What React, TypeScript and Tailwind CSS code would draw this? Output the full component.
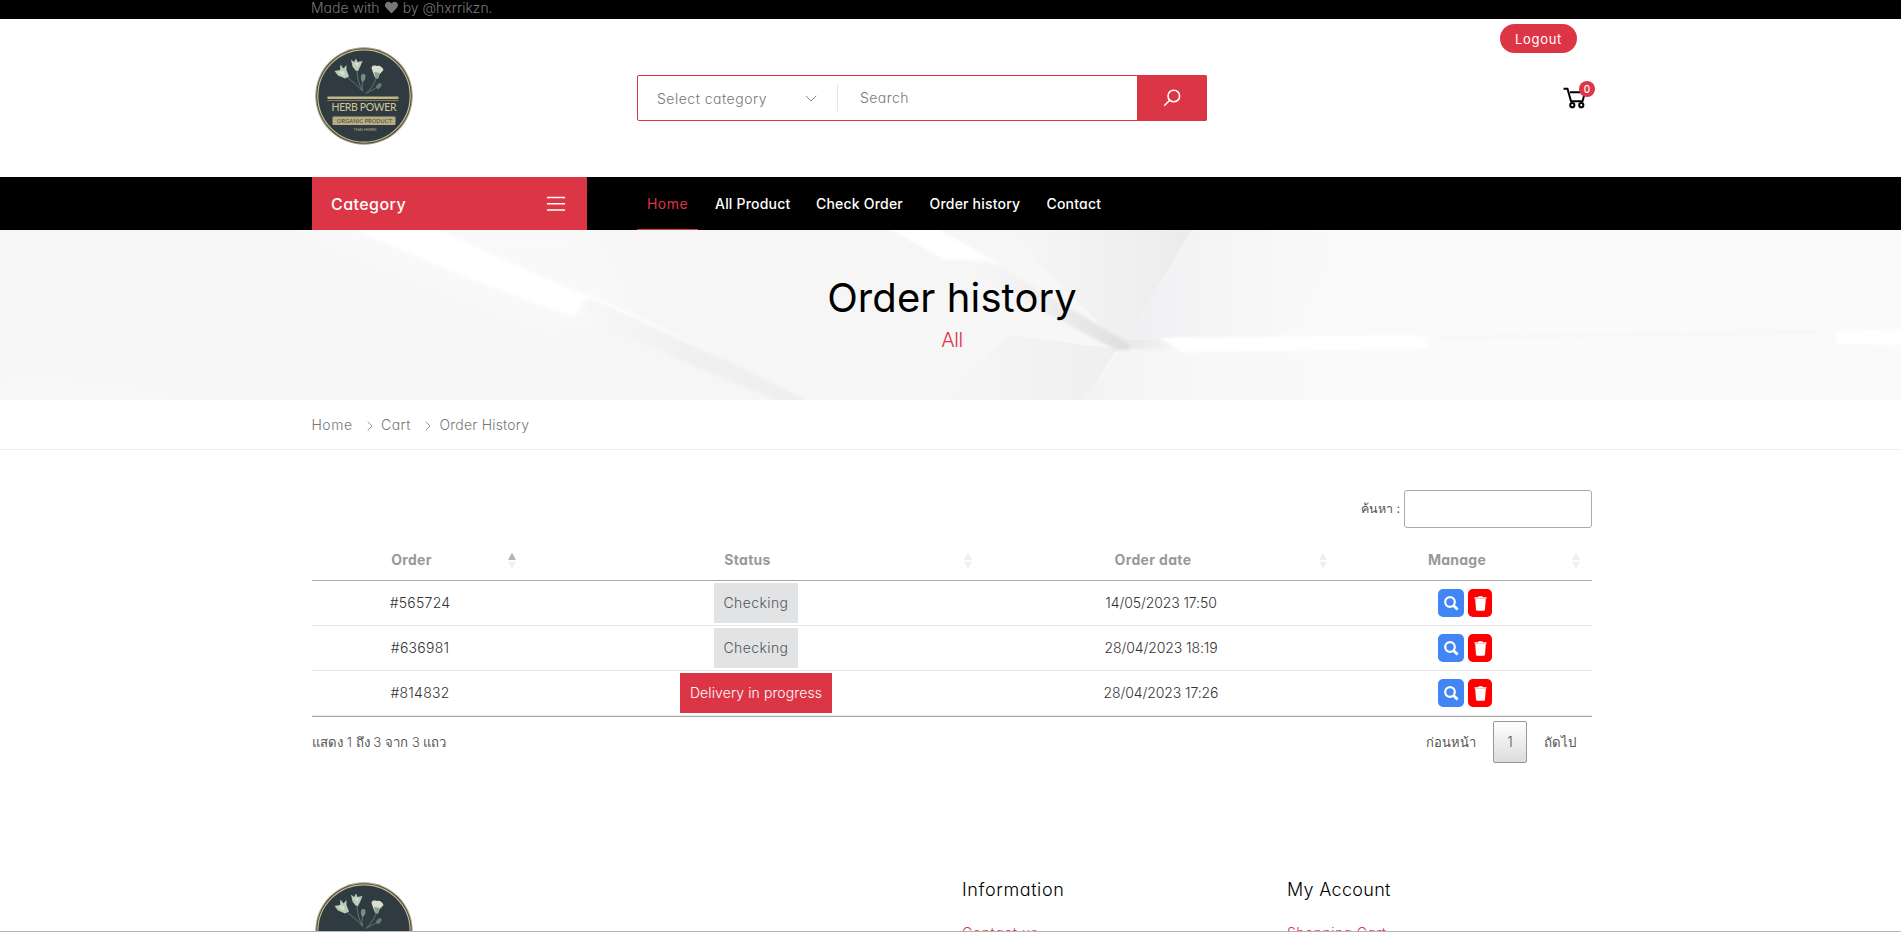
import type { ReactNode } from "react";
import { FaHeart } from "react-icons/fa";

function Sprig() {
  return (
    <g fill="none" stroke="#5f7f76" strokeWidth="0.9" strokeLinecap="round">
      <path d="M32 30 C38 35 43 39 47.500 44" />
      <path d="M42 22 C42 31 44 38 47.500 44" />
      <path d="M48 34 C47 37 46.500 40 47.500 43" />
      <path d="M62 29 C60 36 56 42 51 46.500" />
      <path d="M62 40 C59 43 55 43.500 52 46" />
      <g stroke="none">
        <path fill="#b9cdb9" d="M19.500 24 L25 23 L25.500 17.500 L28.500 21.500 L31.500 18 L31.500 23 L34 29.500 L30 31.500 L23 28.500 Z" />
        <path fill="#dfe3c4" d="M24 25 L28 23.500 L30 27 L27.500 28.500 Z" />
        <path fill="#b9cdb9" d="M36 12.500 L39 15 L41 11.500 L42.500 15 L47.500 14 L45.500 19 L43 24 L40.500 23.500 L37.500 19.500 Z" />
        <path fill="#dfe3c4" d="M40 16 L43.500 16 L42.500 20 Z" />
        <path fill="#d7e0cd" d="M56.500 21 C57 18 60 18.500 61.500 19 C64 17.800 68 20 68.500 23 L64.500 27.500 L63 31.500 L60 30.500 L58 25.500 Z" />
        <path fill="#86a596" d="M59 25 L65 26 L62.500 32 L60.500 31 Z" />
        <path fill="#6f9283" d="M46 29 C46.500 26.500 49.500 26.500 50.500 28.500 C50.800 31.500 49.500 34 47.700 35 C46 34 45.700 31 46 29 Z" />
        <path fill="#5d8071" d="M61 40 C61.500 37 64.500 35.500 66.500 36.500 C67 39.500 65 42 62 42 Z" />
      </g>
    </g>
  );
}

function Logo({ cropped }: { cropped?: boolean }) {
  return (
    <svg width="98" height={cropped ? 50 : 98} viewBox={cropped ? "0 0 98 50" : "0 0 98 98"} className="block shrink-0">
      <circle cx="49" cy="49" r="48.700" fill="#a39d7d" />
      <circle cx="49" cy="49" r="47.600" fill="#2f3b40" />
      <circle cx="49" cy="49" r="46.200" fill="none" stroke="#c9bd8c" strokeWidth="1.200" />
      <Sprig />
      <rect x="12.500" y="49.500" width="71" height="2.500" fill="#c3b586" />
      {!cropped && (
        <g fontFamily="Lato, sans-serif" fontWeight="400">
          <rect x="12.500" y="53" width="71" height="0.900" fill="#8d8768" />
          <text x="16.500" y="64.200" textLength="65" fontSize="10.500" fill="#d3c594">HERB POWER</text>
          <rect x="17.500" y="69.500" width="63" height="8.500" rx="1" fill="#b8ac83" />
          <text x="22" y="75.800" textLength="55" fontSize="5.600" fill="#39443f">ORGANIC PRODUCT</text>
          <text x="38.500" y="84" textLength="23" fontSize="4" fill="#b8b08c">THAI HERBS</text>
        </g>
      )}
    </svg>
  );
}

function BannerArt() {
  return (
    <svg viewBox="0 230 1901 170" preserveAspectRatio="none" className="absolute inset-0 h-full w-full">
      <defs>
        <linearGradient id="base" x1="0" x2="1">
          <stop offset="0" stopColor="#f6f6f6" />
          <stop offset="0.480" stopColor="#f6f6f6" />
          <stop offset="0.750" stopColor="#fafafa" />
        </linearGradient>
        <linearGradient id="shadeL" x1="0" x2="1">
          <stop offset="0" stopColor="#ececed" stopOpacity="0" />
          <stop offset="1" stopColor="#ebebec" />
        </linearGradient>
        <linearGradient id="shadeR" x1="0" x2="1">
          <stop offset="0" stopColor="#efeff2" />
          <stop offset="1" stopColor="#f9f9f9" stopOpacity="0" />
        </linearGradient>
        <linearGradient id="strip" x1="0" x2="1">
          <stop offset="0" stopColor="#f6f6f6" stopOpacity="0" />
          <stop offset="0.500" stopColor="#efefef" />
          <stop offset="1" stopColor="#dedede" />
        </linearGradient>
        <linearGradient id="strip2" x1="0" x2="1">
          <stop offset="0" stopColor="#f7f7f7" />
          <stop offset="0.500" stopColor="#f0f0f0" />
          <stop offset="1" stopColor="#efefef" />
        </linearGradient>
        <linearGradient id="glow" x1="0" x2="1">
          <stop offset="0" stopColor="#ffffff" />
          <stop offset="1" stopColor="#ffffff" stopOpacity="0" />
        </linearGradient>
        <linearGradient id="joint" x1="0" x2="1">
          <stop offset="0" stopColor="#e6e6e6" />
          <stop offset="1" stopColor="#f6f6f6" />
        </linearGradient>
        <filter id="s1" x="-10%" y="-20%" width="120%" height="140%"><feGaussianBlur stdDeviation="1.500" /></filter>
        <filter id="s8" x="-20%" y="-40%" width="140%" height="180%"><feGaussianBlur stdDeviation="12" /></filter>
      </defs>
      <rect x="0" y="230" width="1901" height="170" fill="url(#base)" />
      <polygon points="260,220 590,220 630,310 550,335" fill="#f9f9f9" filter="url(#s8)" />
      <polygon points="0,375 150,390 270,410 0,410" fill="#f9f9f9" filter="url(#s8)" />
      <polygon points="1000,226 1194,226 1126,340 1112,336" fill="url(#shadeL)" />
      <polygon points="940,402 1010,335 1117,349 1083,402" fill="url(#shadeL)" opacity="0.700" />
      <polygon points="1194,226 1360,226 1280,338 1126,338" fill="url(#shadeR)" />
      <polygon points="1119,350 1270,350 1250,402 1083,402" fill="url(#shadeR)" opacity="0.500" />
      <g filter="url(#s1)">
        <polygon points="350,228 433,228 588,297 574,317 478,282" fill="#ffffff" />
        <polygon points="580,302 600,300 812,402 780,402 600,326" fill="url(#strip2)" />
        <polygon points="582,294 600,299 730,358 715,357" fill="url(#glow)" />
        <polygon points="888,228 936,228 1000,264 955,259 945,260" fill="#ffffff" />
        <polygon points="950,262 985,258 1127,342 1130,350 1116,350" fill="url(#strip)" />
        <polygon points="1124,339 1160,338 1176,350 1130,349" fill="url(#joint)" />
        <polygon points="1162,338 1415,335 1427,339 1427,347 1418,349 1180,352 1172,345" fill="#ffffff" />
        <polygon points="1440,336 1820,331 1820,333 1440,339" fill="#f6f6f6" />
        <polygon points="1834,331 1910,330 1910,345 1838,344" fill="#ffffff" />
      </g>
    </svg>
  );
}

function Chevron({ className }: { className: string }) {
  return (
    <svg width="6" height="10" viewBox="0 0 6 10" className={className} fill="none" stroke="#8a8a8a" strokeWidth="0.9">
      <path d="M0.700 0.700 L5 5 L0.700 9.300" />
    </svg>
  );
}

function SortArrows({ active }: { active?: boolean }) {
  return (
    <svg width="8" height="17" viewBox="0 0 8 17" className="mr-[12px] shrink-0">
      <path d="M4 0.500 L8 8 H0 Z" fill={active ? "#b5b5b5" : "#efefef"} />
      <path d="M4 16.500 L8 10 H0 Z" fill="#f0f0f0" />
    </svg>
  );
}

function Head({ width, children, active }: { width: string; children: ReactNode; active?: boolean }) {
  return (
    <div className={`${width} flex items-center`}>
      <span className="flex-1 pl-[3px] text-center">{children}</span>
      <SortArrows active={active} />
    </div>
  );
}

const navLinks = [
  { label: "All Product", box: "w-[101px]" },
  { label: "Check Order", box: "w-[113.500px]" },
  { label: "Order history", box: "w-[117px]" },
  { label: "Contact", box: "w-[60px]" },
];

const orders = [
  { id: "#565724", status: "Checking", date: "14/05/2023 17:50" },
  { id: "#636981", status: "Checking", date: "28/04/2023 18:19" },
  { id: "#814832", status: "Delivery in progress", date: "28/04/2023 17:26" },
];

function OrderRow({ id, status, date }: { id: string; status: string; date: string }) {
  const checking = status === "Checking";
  return (
    <div className="flex h-[45px] items-center border-b border-[#e9e9e9] text-center text-[#333]">
      <div className="w-[216px] tracking-[0.250px]">{id}</div>
      <div className="flex w-[456px] justify-center">
        <span
          className={
            checking
              ? "flex h-10 w-[84px] items-center justify-center bg-[#e2e3e5] tracking-[0.400px] text-[#555]"
              : "flex h-10 w-[152px] items-center justify-center bg-[#dc3545] tracking-[0.100px] text-white"
          }
        >
          {status}
        </span>
      </div>
      <div className="w-[354px] tracking-[-0.100px]">{date}</div>
      <div className="flex w-[254px] justify-center gap-1">
        <button className="flex h-7 w-[26px] items-center justify-center rounded-[5px] bg-[#4285f4]">
          <svg width="15" height="15" viewBox="0 0 15 15" fill="none" stroke="#fff">
            <circle cx="6" cy="6" r="4.800" strokeWidth="2.200" />
            <path d="M9.500 9.500 L13.600 13.600" strokeWidth="2.800" />
          </svg>
        </button>
        <button className="flex h-7 w-[24px] items-center justify-center rounded-[5px] bg-[#fe0000]">
          <svg width="13" height="15" viewBox="0 0 13 15" fill="#fff">
            <path d="M0.500 1.200 H4 L4.700 0.300 H8.300 L9 1.200 H12.500 V2.700 H0.500 Z" />
            <path d="M1.200 3.100 H11.800 L11 13.500 Q10.900 14.700 9.800 14.700 H3.200 Q2.100 14.700 2 13.500 Z" />
          </svg>
        </button>
      </div>
    </div>
  );
}

export default function App() {
  return (
    <div className="relative h-[932px] w-full overflow-hidden whitespace-nowrap bg-white font-['Inter',sans-serif] text-[14px] leading-5 font-light text-[#777] [font-feature-settings:'cv11']">
      <div className="flex h-[19px] items-start bg-black pl-[311px] leading-4 text-[#777]">
        <span>Made with</span>
        <FaHeart className="mx-[5px] mt-[1px] text-[13px]" />
        <span>by @hxrrikzn.</span>
      </div>

      <header className="flex h-[158px] pl-[315px]">
        <div className="w-[322px] pt-7"><Logo /></div>
        <div className="mt-14 flex h-[46px] w-[570px] rounded-[2px] border border-[#dc3545]">
          <div className="flex w-[199px] items-center justify-between pr-5 pl-[19px]">
            <span className="pt-[2px] tracking-[0.500px]">Select category</span>
            <svg width="12" height="7" viewBox="0 0 12 7" fill="none" stroke="#888" strokeWidth="1">
              <path d="M0.800 0.800 L6 6 L11.200 0.800" />
            </svg>
          </div>
          <div className="mt-[9px] h-[26px] w-px bg-[#e5e5e5]" />
          <div className="flex flex-1 items-center pl-[22px] tracking-[0.450px]">Search</div>
          <button className="-my-px -mr-px flex w-[70px] items-center justify-center rounded-r-[2px] bg-[#dc3545]">
            <svg width="18" height="18" viewBox="0 0 18 18" fill="none" stroke="#fff" strokeWidth="1.600">
              <circle cx="10.800" cy="7" r="5.800" />
              <path d="M6.700 11.200 L1.200 16.800" />
            </svg>
          </button>
        </div>
        <div className="flex w-[385px] flex-col items-end pt-[5px]">
          <button className="mr-[15px] h-[29px] w-[77px] rounded-full bg-[#dc3545] text-[13px] font-normal tracking-[0.700px] text-white">
            Logout
          </button>
          <div className="relative mt-[34px] mr-[5px] h-[22px] w-6">
            <svg width="24" height="22" viewBox="0 0 24 22" fill="none" stroke="#000" strokeWidth="2">
              <path d="M0.500 1.800 H4.500 L8 14.200 H19.500 L22 5.200 H7" />
              <circle cx="9.300" cy="18.200" r="2.100" />
              <circle cx="18.300" cy="18.200" r="2.100" />
            </svg>
            <span className="absolute -top-[6px] left-4 flex h-4 w-4 items-center justify-center rounded-full bg-[#dc3545] text-[10px] font-medium text-white">0</span>
          </div>
        </div>
      </header>

      <nav className="flex h-[53px] bg-black pl-[312px]">
        <div className="flex w-[275px] items-center justify-between bg-[#dc3545] pr-[22px] pl-[19px] text-[16px] font-medium text-white">
          <span className="tracking-[0.450px]">Category</span>
          <svg width="18" height="16" viewBox="0 0 18 16" stroke="#fff" strokeWidth="1.500">
            <path d="M0 1.500 H18 M0 7.700 H18 M0 14 H18" />
          </svg>
        </div>
        <div className="ml-[50px] flex leading-[53px] font-medium text-white">
          <span className="mr-[17px] h-full w-[61px] border-b border-[#dc3545] text-center font-normal tracking-[0.450px] text-[#dc3545]">Home</span>
          {navLinks.map((l) => (
            <span key={l.label} className={`${l.box} tracking-[0.200px]`}>{l.label}</span>
          ))}
        </div>
      </nav>

      <section className="relative h-[170px]">
        <BannerArt />
        <div className="relative flex flex-col items-center pt-[46px] pl-[3px]">
          <h1 className="text-[40px] leading-[44px] font-[380] tracking-[0.100px] text-black">Order history</h1>
          <p className="mt-2 text-[20px] leading-6 tracking-[-0.400px] text-[#dc3545]">All</p>
        </div>
      </section>

      <div className="flex h-[50px] items-center border-b border-[#f0f0f0] pl-[311.500px] text-[#777]">
        <span className="w-[55.500px] tracking-[0.500px]">Home</span>
        <Chevron className="mt-[3px] mr-[8px]" />
        <span className="w-[44px] tracking-[0.500px]">Cart</span>
        <Chevron className="mt-[3px] mr-[8.500px]" />
        <span className="tracking-[0.200px]">Order History</span>
      </div>

      <main className="ml-[312px] w-[1280px] pt-10">
        <div className="flex h-[38px] items-center justify-end gap-1 font-normal text-[#555]">
          <span className="text-[12.500px]">ค้นหา :</span>
          <div className="h-[38px] w-[188px] rounded-[3px] border border-[#aaa]" />
        </div>

        <div className="mt-[12px] flex h-[41px] border-b border-[#aaa] font-bold text-[#999]">
          <Head width="w-[216px]" active><span className="tracking-[0.300px]">Order</span></Head>
          <Head width="w-[456px]"><span className="tracking-[0.300px]">Status</span></Head>
          <Head width="w-[355px]"><span className="tracking-[0.350px]">Order date</span></Head>
          <Head width="w-[253px]"><span className="tracking-[0.250px]">Manage</span></Head>
        </div>
        <div className="border-b border-[#aaa]">
          {orders.map((o) => (
            <OrderRow key={o.id} {...o} />
          ))}
        </div>

        <div className="flex justify-between text-[13px] text-[#555]">
          <span className="mt-[15px] text-[13.200px]">แสดง 1 ถึง 3 จาก 3 แถว</span>
          <div className="mt-1 flex h-[42px] items-center pr-[16px]">
            <span className="mr-[17px]">ก่อนหน้า</span>
            <span className="mr-[17px] flex h-[42px] w-[34px] items-center justify-center rounded-[2px] border border-[#979797] bg-linear-to-b from-white to-[#dcdcdc] text-[14px]">1</span>
            <span className="text-[13.300px]">ถัดไป</span>
          </div>
        </div>
      </main>

      <footer className="mt-[116px] flex h-[53px] pl-[315px]">
        <div className="mt-[3px] w-[647px]"><Logo cropped /></div>
        <div className="w-[325px]">
          <h3 className="text-[18px] leading-[22px] tracking-[0.600px] text-black">Information</h3>
          <p className="mt-[22px] tracking-[0.600px] text-[#dc3545]">Contact us</p>
        </div>
        <div>
          <h3 className="text-[18px] leading-[22px] tracking-[0.300px] text-black">My Account</h3>
          <p className="mt-[22px] tracking-[0.400px] text-[#dc3545]">Shopping Cart</p>
        </div>
      </footer>
      <div className="absolute inset-x-0 bottom-0 h-px bg-[#b5b5b5]" />
    </div>
  );
}
